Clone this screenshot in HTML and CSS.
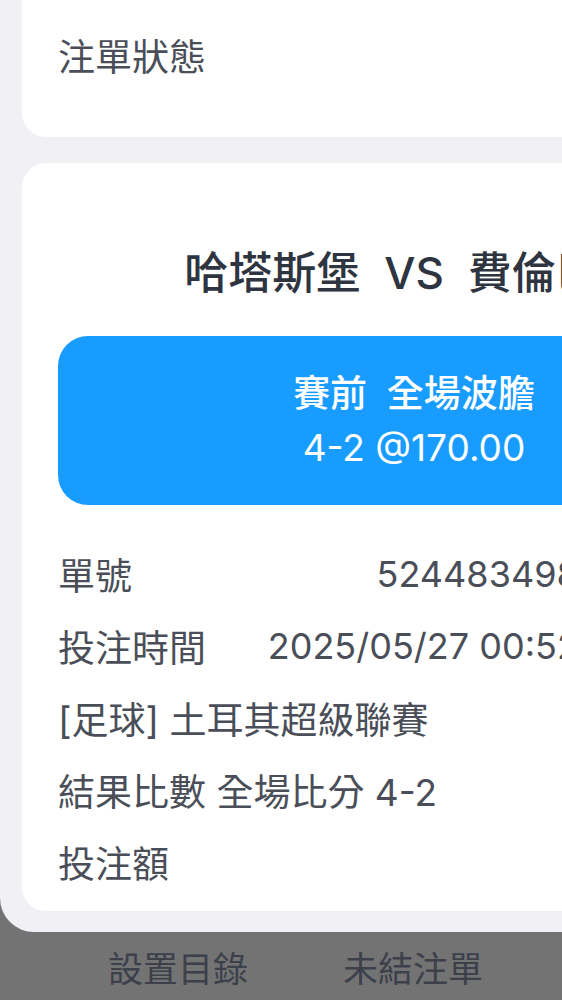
FILE: index.html
```html
<!DOCTYPE html>
<html>
<head>
  <title>注單詳情</title>
  <link rel="stylesheet" href="styles.css">
</head>
<body>
  <div class="sheet">
    <div class="card card-status">
      <div class="row row-top">
        <span class="label link">注單詳情</span>
        <span class="value">已結算</span>
      </div>
      <div class="row">
        <span class="label">注單狀態</span>
        <span class="value">贏</span>
      </div>
    </div>

    <div class="card card-bet">
      <h2 class="match">哈塔斯堡<span class="vs">VS</span>費倫巴治</h2>

      <div class="pick">
        <div class="pick-market">賽前&nbsp;&nbsp;全場波膽</div>
        <div class="pick-odds">4-2 @170.00</div>
      </div>

      <div class="row">
        <span class="label">單號</span>
        <span class="value">524483498721654035</span>
      </div>
      <div class="row">
        <span class="label">投注時間</span>
        <span class="value">2025/05/27 00:52:36 GMT+8</span>
      </div>
      <div class="row">
        <span class="label">[足球] 土耳其超級聯賽</span>
      </div>
      <div class="row">
        <span class="label">結果比數 全場比分 4-2</span>
      </div>
      <div class="row">
        <span class="label">投注額</span>
        <span class="value">100.00</span>
      </div>
    </div>
  </div>

  <div class="tabbar">
    <span class="tab">設置目錄</span>
    <span class="tab">未結注單</span>
  </div>
</body>
</html>
```

FILE: styles.css
```css
html, body {
  margin: 0;
  overflow: hidden;
}
body {
  width: 828px;
  height: 1000px;
  background: #737373;
  font-family: Inter, "Noto Sans CJK TC", sans-serif;
  color: #4a4e58;
}
.sheet {
  width: 828px;
  height: 932px;
  box-sizing: border-box;
  padding: 0 22px 21px;
  background: #f0f0f5;
  border-bottom-left-radius: 34px;
  display: flex;
  flex-direction: column;
  gap: 26px;
}
.card {
  background: #fff;
  padding: 0 36px;
  border-radius: 24px;
}
.card-status {
  margin-top: -61px;
  padding-bottom: 46px;
  border-top-left-radius: 0;
  border-top-right-radius: 0;
}
.card-bet {
  flex: 1;
  padding-top: 80px;
}
.row {
  height: 72px;
  display: flex;
  align-items: center;
  justify-content: space-between;
  gap: 20px;
  font-size: 37px;
  white-space: nowrap;
}
.row .value {
  font-size: 36px;
}
.row-top {
  height: 80px;
}
.label.link {
  color: #8ccbf5;
}
.card-bet .pick + .row {
  margin-top: 33px;
}
.match {
  margin: 0;
  text-align: center;
  font-size: 44px;
  line-height: 60px;
  font-weight: 500;
  color: #2e3440;
  white-space: nowrap;
}
.vs {
  margin: 0 24px;
}
.pick {
  margin-top: 33px;
  height: 169px;
  box-sizing: border-box;
  padding-top: 31px;
  background: #199cff;
  border-radius: 30px;
  color: #fff;
  text-align: center;
  font-size: 37px;
  line-height: 54px;
}
.pick-market {
  font-weight: 500;
}
.tabbar {
  height: 68px;
  display: flex;
  align-items: center;
  gap: 95px;
  padding-left: 108px;
  font-size: 35px;
  color: #3c404b;
}
```
